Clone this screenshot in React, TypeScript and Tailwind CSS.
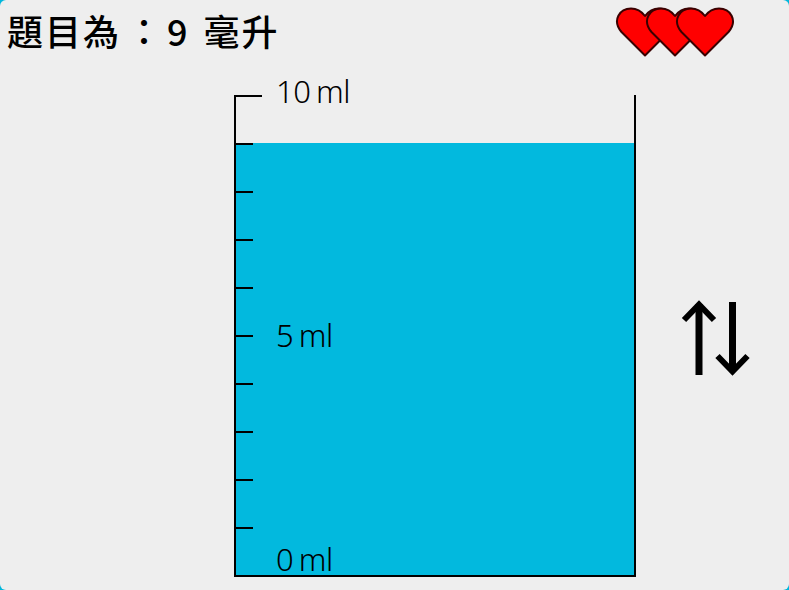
function Heart({ first }: { first?: boolean }) {
  return (
    <svg viewBox="0 0 60 50" width="60" height="50" className={first ? "shrink-0" : "-ml-[30px] shrink-0"}>
      <path
        d="M30 48.5 L6.5 25 C-3.5 13 5 1.5 16 1.5 C22 1.5 27 5 30 9 C33 5 38 1.5 44 1.5 C55 1.5 63.5 13 53.5 25 Z"
        fill="#ff0000"
        stroke="#3a0000"
        strokeWidth="2"
        strokeLinejoin="round"
      />
    </svg>
  );
}

const rows = [
  { label: "10 ml", water: false },
  { label: "", water: true },
  { label: "", water: true },
  { label: "", water: true },
  { label: "", water: true },
  { label: "5 ml", water: true },
  { label: "", water: true },
  { label: "", water: true },
  { label: "", water: true },
  { label: "", water: true },
];

function Label({ text }: { text: string }) {
  return (
    <span className="font-['Noto_Sans',sans-serif] text-[31px] font-light leading-[40px] tracking-[-0.5px] [word-spacing:-2px]">
      {text}
    </span>
  );
}

export default function App() {
  return (
    <div className="h-[590px] w-[789px] overflow-hidden bg-[#00b7dc]">
      <div className="flex h-full w-full flex-col rounded-[6px] bg-[#eeeeee] font-['Noto_Sans_CJK_TC','Noto_Sans',sans-serif] text-black">
        <header className="flex h-[95px] shrink-0 items-start justify-between pl-[7px] pr-[53px]">
          <h1 className="mt-[7px] flex text-[36px] font-medium leading-[46px] tracking-[2px]">
            <span>題目為</span>
            <span className="ml-[5px]">：</span>
            <span className="ml-[3px]">9</span>
            <span className="ml-[14px]">毫升</span>
          </h1>
          <div className="mt-[7px] flex pr-[1px]">
            <Heart first />
            <Heart />
            <Heart />
          </div>
        </header>

        <main className="flex items-center pl-[234px]">
          <div className="flex h-[482px] w-[402px] flex-col border-x-2 border-b-2 border-black">
            {rows.map((row, i) => (
              <div key={i} className={row.water ? "flex h-[48px] bg-[#02b9de]" : "flex h-[48px]"}>
                <div className={i === 0 ? "h-[2px] w-[26px] bg-black" : "h-[2px] w-[17px] bg-black"} />
                {row.label && (
                  <div className={i === 0 ? "ml-[14px] -mt-[4px] flex h-[0px] items-center" : "ml-[23px] -mt-[1px] flex h-[2px] items-center"}>
                    <Label text={row.label} />
                  </div>
                )}
                {i === 9 && (
                  <div className="ml-[23px] -mb-[4px] flex items-end self-end">
                    <Label text="0 ml" />
                  </div>
                )}
              </div>
            ))}
          </div>
          <svg className="ml-[44px] mt-[4px]" width="72" height="76" viewBox="0 0 72 76" fill="none" stroke="black" strokeWidth="7">
            <path d="M19 75 V4" />
            <path d="M4 20 L19 4.5 L34 20" strokeWidth="6" />
            <path d="M52.5 2 V72" />
            <path d="M37.5 56 L52.5 71.5 L67.5 56" strokeWidth="6" />
          </svg>
        </main>
      </div>
    </div>
  );
}
